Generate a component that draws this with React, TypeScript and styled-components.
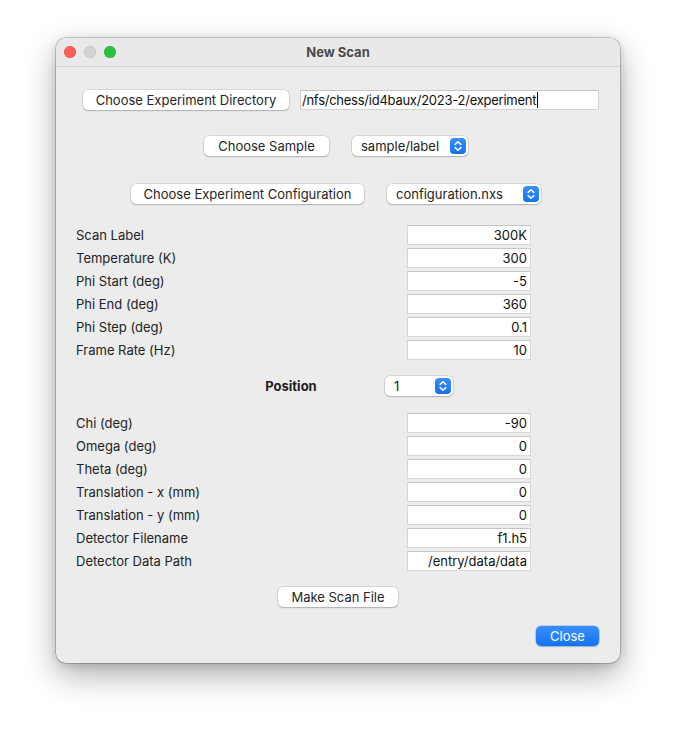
import React from "react";
import styled, { createGlobalStyle } from "styled-components";

const Global = createGlobalStyle`
  html, body { margin: 0; padding: 0; background: #ffffff; }
  body { font-family: Inter, "Liberation Sans", Arial, sans-serif; font-size: 13px; color: #232323; }
`;

const Page = styled.div`
  width: 676px;
  height: 738px;
  padding: 38px 0 0 56px;
  box-sizing: border-box;
`;

const Window = styled.div`
  width: 564px;
  height: 625px;
  box-sizing: border-box;
  background: #ececec;
  border-radius: 10px;
  box-shadow: 0 0 0 0.5px rgba(0, 0, 0, 0.35), 0 12px 32px rgba(0, 0, 0, 0.32), 0 2px 8px rgba(0,0,0,0.15);
  overflow: hidden;
  display: flex;
  flex-direction: column;
`;

const TitleBar = styled.div`
  height: 28px;
  flex: none;
  display: flex;
  align-items: center;
  position: relative;
  background: #e9e9e9;
  border-bottom: 1px solid #d3d3d3;
`;

const Lights = styled.div`
  display: flex;
  gap: 8px;
  padding-left: 8px;
`;

const Light = styled.span<{ $c: string; $b: string }>`
  width: 12px;
  height: 12px;
  border-radius: 50%;
  background: ${(p) => p.$c};
  box-shadow: inset 0 0 0 0.5px ${(p) => p.$b};
`;

const Title = styled.div`
  position: absolute;
  left: 0;
  right: 0;
  text-align: center;
  font-weight: 700;
  font-size: 13px;
  color: #4b4b4b;
  pointer-events: none;
`;

const Body = styled.div`
  display: flex;
  flex-direction: column;
`;

const Row = styled.div<{ $mt: number; $pl: number; $gap?: number }>`
  display: flex;
  align-items: center;
  margin-top: ${(p) => p.$mt}px;
  padding-left: ${(p) => p.$pl}px;
  gap: ${(p) => p.$gap ?? 0}px;
  height: 21px;
`;

const Button = styled.button<{ $w: number }>`
  width: ${(p) => p.$w}px;
  height: 20px;
  padding: 0;
  border: none;
  border-radius: 5px;
  background: #ffffff;
  box-shadow: 0 0 0 0.5px rgba(0, 0, 0, 0.18), 0 1px 1.5px rgba(0, 0, 0, 0.18);
  font-family: inherit;
  font-size: 13px;
  color: #262626;
  line-height: 20px;
  text-align: center;
  cursor: default;
`;

const PrimaryButton = styled(Button)`
  background: linear-gradient(#3a8ff9, #1473f5);
  color: #ffffff;
  box-shadow: 0 0 0 0.5px rgba(0, 60, 160, 0.35), 0 1px 1.5px rgba(0, 0, 0, 0.15);
`;

const PathField = styled.div<{ $w: number }>`
  width: ${(p) => p.$w}px;
  height: 20px;
  box-sizing: border-box;
  background: #ffffff;
  border: 1px solid #d2d2d2;
  border-top-color: #c4c4c4;
  padding-left: 1px;
  display: flex;
  align-items: center;
  font-size: 13px;
  letter-spacing: -0.25px;
  color: #111;
  white-space: nowrap;
`;

const Caret = styled.span`
  display: inline-block;
  width: 1px;
  height: 16px;
  background: #000;
  margin-left: 1px;
`;

const Select = styled.div<{ $w: number }>`
  width: ${(p) => p.$w}px;
  height: 20px;
  box-sizing: border-box;
  background: #ffffff;
  border-radius: 5px;
  box-shadow: 0 0 0 0.5px rgba(0, 0, 0, 0.18), 0 1px 1.5px rgba(0, 0, 0, 0.18);
  display: flex;
  align-items: center;
  justify-content: space-between;
  padding: 0 2px 0 9px;
  font-size: 13px;
  color: #232323;
`;

const Form = styled.div<{ $mt: number }>`
  display: grid;
  grid-template-columns: 331px 124px;
  grid-auto-rows: 20px;
  row-gap: 3px;
  margin-top: ${(p) => p.$mt}px;
  padding-left: 20px;
`;

const Label = styled.div`
  display: flex;
  align-items: center;
  font-size: 13px;
  color: #232323;
`;

const Input = styled.div`
  box-sizing: border-box;
  background: #ffffff;
  border: 1px solid #d6d6d6;
  border-top-color: #c6c6c6;
  display: flex;
  align-items: center;
  justify-content: flex-end;
  padding-right: 3px;
  font-size: 13px;
  color: #111;
  white-space: nowrap;
`;

const SectionLabel = styled.div`
  width: 182px;
  text-align: center;
  font-weight: 700;
  font-size: 13px;
  color: #1e1e1e;
`;

const Stepper = () => (
  <svg width="16" height="16" viewBox="0 0 16 16">
    <defs>
      <linearGradient id="stg" x1="0" y1="0" x2="0" y2="1">
        <stop offset="0" stopColor="#3a8ff9" />
        <stop offset="1" stopColor="#1473f5" />
      </linearGradient>
    </defs>
    <rect x="0" y="0" width="16" height="16" rx="4" fill="url(#stg)" />
    <path d="M5.2 6.4 L8 3.8 L10.8 6.4" fill="none" stroke="#fff" strokeWidth="1.5" strokeLinecap="round" strokeLinejoin="round" />
    <path d="M5.2 9.6 L8 12.2 L10.8 9.6" fill="none" stroke="#fff" strokeWidth="1.5" strokeLinecap="round" strokeLinejoin="round" />
  </svg>
);

const scanFields: [string, string][] = [
  ["Scan Label", "300K"],
  ["Temperature (K)", "300"],
  ["Phi Start (deg)", "-5"],
  ["Phi End (deg)", "360"],
  ["Phi Step (deg)", "0.1"],
  ["Frame Rate (Hz)", "10"],
];

const positionFields: [string, string][] = [
  ["Chi (deg)", "-90"],
  ["Omega (deg)", "0"],
  ["Theta (deg)", "0"],
  ["Translation - x (mm)", "0"],
  ["Translation - y (mm)", "0"],
  ["Detector Filename", "f1.h5"],
  ["Detector Data Path", "/entry/data/data"],
];

export default function App() {
  return (
    <Page>
      <Global />
      <Window>
        <TitleBar>
          <Lights>
            <Light $c="#fe5f57" $b="rgba(200,40,30,0.35)" />
            <Light $c="#d3d3d3" $b="rgba(0,0,0,0.1)" />
            <Light $c="#29c33f" $b="rgba(20,130,30,0.35)" />
          </Lights>
          <Title>New Scan</Title>
        </TitleBar>
        <Body>
          <Row $mt={22} $pl={27} $gap={11}>
            <Button $w={206}>Choose Experiment Directory</Button>
            <PathField $w={299}>
              /nfs/chess/id4baux/2023-2/experiment
              <Caret />
            </PathField>
          </Row>
          <Row $mt={25} $pl={148} $gap={23}>
            <Button $w={125}>Choose Sample</Button>
            <Select $w={116}>
              sample/label
              <Stepper />
            </Select>
          </Row>
          <Row $mt={27} $pl={75} $gap={23}>
            <Button $w={233}>Choose Experiment Configuration</Button>
            <Select $w={154}>
              configuration.nxs
              <Stepper />
            </Select>
          </Row>
          <Form $mt={21}>
            {scanFields.map(([l, v]) => (
              <React.Fragment key={l}>
                <Label>{l}</Label>
                <Input>{v}</Input>
              </React.Fragment>
            ))}
          </Form>
          <Row $mt={15} $pl={144} $gap={3}>
            <SectionLabel>Position</SectionLabel>
            <Select $w={68}>
              1
              <Stepper />
            </Select>
          </Row>
          <Form $mt={17}>
            {positionFields.map(([l, v]) => (
              <React.Fragment key={l}>
                <Label>{l}</Label>
                <Input>{v}</Input>
              </React.Fragment>
            ))}
          </Form>
          <Row $mt={15} $pl={222}>
            <Button $w={120}>Make Scan File</Button>
          </Row>
          <Row $mt={18} $pl={480}>
            <PrimaryButton $w={63}>Close</PrimaryButton>
          </Row>
        </Body>
      </Window>
    </Page>
  );
}
